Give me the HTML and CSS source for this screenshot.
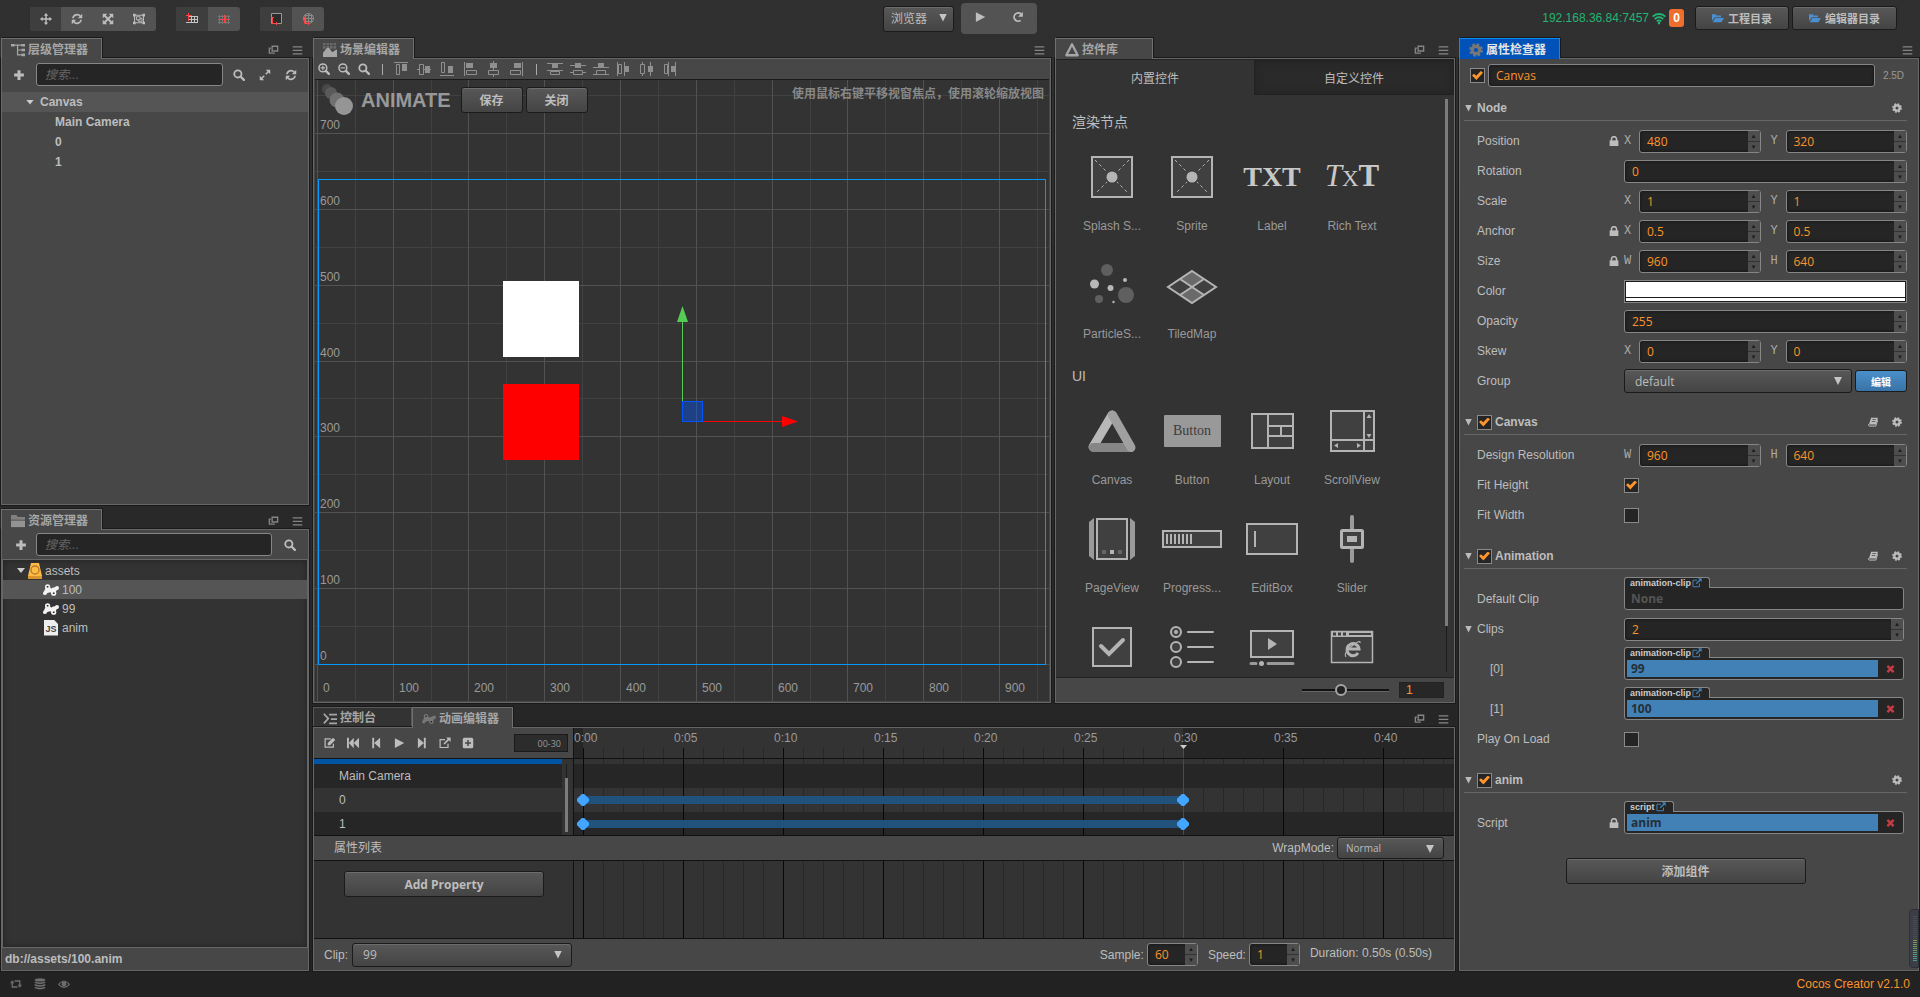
FILE: index.html
```html
<!DOCTYPE html>
<html lang="zh-CN">
<head>
  <meta charset="UTF-8">
  <title>Cocos Creator</title>
  <link rel="stylesheet" href="styles.css">
</head>
<body>

  <!-- icon sprite -->
  <svg class="sprite" aria-hidden="true">
    <symbol id="i-move" viewBox="0 0 16 16"><path d="M8 0l3 3.5H9V7h3.5V5L16 8l-3.5 3V9H9v3.5h2L8 16l-3-3.5h2V9H3.5v2L0 8l3.5-3v2H7V3.5H5z"/></symbol>
    <symbol id="i-refresh" viewBox="0 0 16 16"><path d="M2.5 7A5.6 5.6 0 0 1 12.3 4.2M13.5 9A5.6 5.6 0 0 1 3.7 11.8" fill="none" stroke="currentColor" stroke-width="2.2"/><path d="M15 1v6H9zM1 15V9h6z"/></symbol>
    <symbol id="i-scale" viewBox="0 0 16 16"><path d="M3 3l10 10M13 3L3 13" stroke="currentColor" stroke-width="2.6"/><path d="M1 1h6L1 7zM15 1v6L9 1zM15 15H9l6-6zM1 15V9l6 6z"/></symbol>
    <symbol id="i-rect" viewBox="0 0 16 16"><path d="M2 3h12v10H2zM4.500 5h5v4h-5zM10 7h2v4H7V9" fill="none" stroke="currentColor" stroke-width="1.300"/><path d="M0 1h3.500v3.500H0zM12.500 1H16v3.500h-3.500zM0 11.500h3.500V15H0zM12.500 11.500H16V15h-3.500z"/></symbol>
    <symbol id="i-plus" viewBox="0 0 16 16"><path d="M6 1.500h4V6h4.500v4H10v4.500H6V10H1.500V6H6z"/></symbol>
    <symbol id="i-search" viewBox="0 0 16 16"><circle cx="6.500" cy="6.500" r="4.800" fill="none" stroke="currentColor" stroke-width="2.400"/><path d="M10 10l4.500 4.500" stroke="currentColor" stroke-width="3" stroke-linecap="round"/></symbol>
    <symbol id="i-zoomin" viewBox="0 0 16 16"><circle cx="6.500" cy="6.500" r="5.200" fill="none" stroke="currentColor" stroke-width="2"/><path d="M10.500 10.500l4 4" stroke="currentColor" stroke-width="3" stroke-linecap="round"/><path d="M3.500 6.500h6M6.500 3.500v6" stroke="currentColor" stroke-width="1.500"/></symbol>
    <symbol id="i-zoomout" viewBox="0 0 16 16"><circle cx="6.500" cy="6.500" r="5.200" fill="none" stroke="currentColor" stroke-width="2"/><path d="M10.500 10.500l4 4" stroke="currentColor" stroke-width="3" stroke-linecap="round"/><path d="M3.500 6.500h6" stroke="currentColor" stroke-width="1.500"/></symbol>
    <symbol id="i-expand" viewBox="0 0 16 16"><path d="M3 13l4-4M9 7l4-4" stroke="currentColor" stroke-width="2"/><path d="M15 1v6L9 1zM1 15V9l6 6z"/></symbol>
    <symbol id="i-popout" viewBox="0 0 16 16"><path d="M6 2.500h8v7H6zM10 12.500H2v-7h2" fill="none" stroke="currentColor" stroke-width="2"/></symbol>
    <symbol id="i-menu" viewBox="0 0 16 16"><path d="M1 3.500h14M1 8.500h14M1 13.500h14" stroke="currentColor" stroke-width="1.800"/></symbol>
    <symbol id="i-tree" viewBox="0 0 16 16"><path d="M2 2.500h12M7.500 2.500v11h5M7.500 8h5" fill="none" stroke="currentColor" stroke-width="1.400"/><path d="M0 1h4v3H0zM12 1h4v3h-4zM12 6.500h4v3h-4zM12 12h4v3h-4z"/></symbol>
    <symbol id="i-scene" viewBox="0 0 16 16"><path d="M0 1h16M0 5h16" stroke="#6a6a6a" stroke-width="3" stroke-dasharray="3 1"/><path d="M0 16v-5c2-2 4-6 6-6s3 5 5 5 3-3 5-2v8z"/></symbol>
    <symbol id="i-lib" viewBox="0 0 16 16"><path d="M8 1.500L14.500 14h-13z" fill="none" stroke="currentColor" stroke-width="2.600" stroke-linejoin="round"/></symbol>
    <symbol id="i-gear" viewBox="0 0 16 16"><circle cx="8" cy="8" r="6.300" fill="none" stroke="currentColor" stroke-width="3" stroke-dasharray="2.800 2.150"/><circle cx="8" cy="8" r="4.200" fill="none" stroke="currentColor" stroke-width="3.600"/></symbol>
    <symbol id="i-folder" viewBox="0 0 16 16"><path d="M0 1h6l2 2.500h8v3H0z" opacity=".6"/><path d="M0 7.500h16V15H0z" opacity=".8"/></symbol>
    <symbol id="i-open" viewBox="0 0 16 16"><path d="M0 12V3h5l1 1.500h6V7H4z"/><path d="M4.500 8H16l-3.500 5.500H1z"/></symbol>
    <symbol id="i-console" viewBox="0 0 16 16"><path d="M1 2l5 5.500L1 13" fill="none" stroke="currentColor" stroke-width="2"/><path d="M7 3h9M9 8h7M7 13h9" stroke="currentColor" stroke-width="2"/></symbol>
    <symbol id="i-anim" viewBox="0 0 16 12"><path d="M4.500 3.500L2.200 8.500M4.500 3.500L9 7M3 8l4-1.500L10.500 8.500 13.500 4M9 5.500l4-1" fill="none" stroke="currentColor" stroke-width="3" stroke-linejoin="round"/><circle cx="1.900" cy="9.200" r="1.900"/><circle cx="4.600" cy="2.800" r="2.600"/><circle cx="10.700" cy="9.200" r="2.600"/><circle cx="14" cy="4" r="2"/><path d="M3.800 2h1.600v1.600H3.800zM9.900 8.400h1.600V10H9.900z" fill="#222"/></symbol>
    <symbol id="i-edit" viewBox="0 0 16 16"><path d="M12.500 9v4.500H1.500v-11H9" fill="none" stroke="currentColor" stroke-width="1.600"/><path d="M5 11V8l7-7 3 3-7 7z"/></symbol>
    <symbol id="i-first" viewBox="0 0 16 16"><path d="M0 1h2.500v14H0zM9 1v14L2.500 8zM16 1v14L9 8z"/></symbol>
    <symbol id="i-prev" viewBox="0 0 16 16"><path d="M3 1h2.500v14H3zM13.500 1v14l-8-7z"/></symbol>
    <symbol id="i-play" viewBox="0 0 16 16"><path d="M2.500 1.500L15 8 2.500 14.500z"/></symbol>
    <symbol id="i-next" viewBox="0 0 16 16"><path d="M10.500 1H13v14h-2.500zM2.500 1l8 7-8 7z"/></symbol>
    <symbol id="i-ext" viewBox="0 0 16 16"><path d="M12 9v5H1.500V3.500H8" fill="none" stroke="currentColor" stroke-width="1.600"/><path d="M15.500.5v6l-2.200-2.100L7.500 10 6 8.500l5.600-5.700L9.500.5z"/></symbol>
    <symbol id="i-addkey" viewBox="0 0 16 16"><path fill-rule="evenodd" d="M3 1h10q2 0 2 2v10q0 2-2 2H3q-2 0-2-2V3q0-2 2-2zm4 3v3H4v2h3v3h2V9h3V7H9V4z"/></symbol>
    <symbol id="i-lock" viewBox="0 0 16 16"><path d="M1 7h14v9H1z"/><path d="M4 8V5a4 4 0 0 1 8 0v3" fill="none" stroke="currentColor" stroke-width="2.400"/></symbol>
    <symbol id="i-book" viewBox="0 0 16 16"><path fill-rule="evenodd" d="M5 1h11l-3.500 11H1.500zm2.200 2.500l-.4 1.200h5.500l.4-1.200zM6.300 6.300l-.4 1.200h5.500l.4-1.200z"/><path d="M1 11.500q-.5 3 1 3h10.500L15.500 5" fill="none" stroke="currentColor" stroke-width="1.600"/></symbol>
    <symbol id="i-cross" viewBox="0 0 16 16"><path d="M2.500 2.500l11 11M13.500 2.500l-11 11" stroke="currentColor" stroke-width="4.400"/></symbol>
    <symbol id="i-wifi" viewBox="0 0 16 16"><path d="M.8 6.500a10 10 0 0 1 14.400 0M3.200 9.200a6.500 6.500 0 0 1 9.600 0M5.500 11.800a3.500 3.500 0 0 1 5 0" fill="none" stroke="currentColor" stroke-width="2.100"/><circle cx="8" cy="13.800" r="1.500"/></symbol>
    <symbol id="i-redo" viewBox="0 0 16 16"><path d="M11.500 12.500A5.500 5.500 0 1 1 12 4" fill="none" stroke="currentColor" stroke-width="2.400"/><path d="M14.500 1v6.500H8z"/></symbol>
    <symbol id="i-retweet" viewBox="0 0 16 16"><path d="M3 5v7h7M6 4h7v6" fill="none" stroke="currentColor" stroke-width="1.800"/><path d="M0 7l3-4 3 4zM10 9l3 4 3-4z"/></symbol>
    <symbol id="i-db" viewBox="0 0 16 16"><ellipse cx="8" cy="2.500" rx="7" ry="2.200"/><path d="M1 4.500q7 3 14 0v2.200q-7 3-14 0zM1 8q7 3 14 0v2.200q-7 3-14 0zM1 11.500q7 3 14 0v2.200q-7 3-14 0z"/></symbol>
    <symbol id="i-eye" viewBox="0 0 16 16"><path d="M.8 8.500q7.200-9 14.400 0-7.200 8-14.400 0z" fill="none" stroke="currentColor" stroke-width="1.500"/><circle cx="8" cy="8" r="3.300"/></symbol>
    <symbol id="a-top" viewBox="0 0 16 16"><path d="M1 1.500h14M3.500 3.500h3v10h-3z" fill="none" stroke="currentColor"/><path d="M9 3h5v7H9z"/></symbol>
    <symbol id="a-middle" viewBox="0 0 16 16"><path d="M3.500 3.500h4v10h-4zM1 8.500h2M8 8.500h7" fill="none" stroke="currentColor"/><path d="M9 5h5v7H9z"/></symbol>
    <symbol id="a-bottom" viewBox="0 0 16 16"><path d="M1 14.500h14M2.500 1.500h3v10h-3z" fill="none" stroke="currentColor"/><path d="M9 5h5v7H9z"/></symbol>
    <symbol id="a-left" viewBox="0 0 16 16"><path d="M2.500 1v14M4.500 9.500h10v4h-10z" fill="none" stroke="currentColor"/><path d="M4 2h7v5H4z"/></symbol>
    <symbol id="a-center" viewBox="0 0 16 16"><path d="M8.500 0v2M8.500 7v2M8.500 14v2M3.500 9.500h10v4h-10z" fill="none" stroke="currentColor"/><path d="M5 2h7v5H5z"/></symbol>
    <symbol id="a-right" viewBox="0 0 16 16"><path d="M14.500 1v14M2.500 9.500h10v4h-10z" fill="none" stroke="currentColor"/><path d="M6 2h7v5H6z"/></symbol>
    <symbol id="d-top" viewBox="0 0 16 16"><path d="M0 2.500h16M0 9.500h16M3.500 10.500h9v3h-9z" fill="none" stroke="currentColor"/><path d="M5 3h6v4H5z"/></symbol>
    <symbol id="d-middle" viewBox="0 0 16 16"><path d="M0 4.500h16M0 11.500h3M13 11.500h3M3.500 9.500h9v4h-9z" fill="none" stroke="currentColor"/><path d="M5 2h6v5H5z"/></symbol>
    <symbol id="d-bottom" viewBox="0 0 16 16"><path d="M0 6.500h16M0 13.500h16M3.500 9.500h9v4h-9z" fill="none" stroke="currentColor"/><path d="M5 2h6v4H5z"/></symbol>
    <symbol id="d-left" viewBox="0 0 16 16"><path d="M1.500 1v14M8.500 1v14M2.500 3.500h3v9h-3z" fill="none" stroke="currentColor"/><path d="M9 5h4v6H9z"/></symbol>
    <symbol id="d-center" viewBox="0 0 16 16"><path d="M3.500 1v14M11.500 1v14" fill="none" stroke="currentColor"/><path d="M1.500 3.500h4v9h-4z" fill="#474747" stroke="currentColor"/><path d="M9 5h5v6H9z"/></symbol>
    <symbol id="d-right" viewBox="0 0 16 16"><path d="M6.500 1v14M13.500 1v14M2.500 3.500h3v9h-3z" fill="none" stroke="currentColor"/><path d="M9 5h4v6H9z"/></symbol>
    <symbol id="w-sprite" viewBox="0 0 60 60"><path d="M10 10h40v40H10z" fill="#404040" stroke="#b4b4b4" stroke-width="2"/><path d="M13 13l34 34M47 13L13 47" stroke="#b4b4b4" stroke-dasharray="3 3"/><circle cx="30" cy="30" r="7" fill="#404040"/><circle cx="30" cy="30" r="5.500" fill="#b4b4b4"/></symbol>
  </svg>

  <header class="topbar">
    <div class="topbar-left">
      <div class="btn-group transform">
        <button class="active" aria-label="移动"><svg class="icon"><use href="#i-move"/></svg></button>
        <button aria-label="旋转"><svg class="icon"><use href="#i-refresh"/></svg></button>
        <button aria-label="缩放"><svg class="icon"><use href="#i-scale"/></svg></button>
        <button aria-label="矩形变换"><svg class="icon"><use href="#i-rect"/></svg></button>
      </div>
      <div class="btn-group">
        <button class="active" aria-label="锚点"><svg class="icon" viewBox="0 0 12 12"><path d="M2 3.500h10M2 6.500h10M0 9.500h12M5.500 3v7M8.500 3v7M11.500 3v7" stroke="#c4c4c4"/><path d="M2.500 0v8M0 2.500h6" stroke="#f44"/></svg></button>
        <button aria-label="中心"><svg class="icon" viewBox="0 0 12 12"><path d="M0 3.500h12M0 6.500h12M0 9.500h12M1.500 2v9M4.500 2v9M7.500 2v9M10.500 2v9" stroke="#777"/><path d="M6.500 2v8M2 6.500h9" stroke="#f44"/></svg></button>
      </div>
      <div class="btn-group">
        <button class="active" aria-label="本地"><svg class="icon" viewBox="0 0 12 12"><path d="M1.500.5h10v10h-10z" fill="#2b2b2b" stroke="#999"/><path d="M2.500 4v6.500H8M1 4.500h3M6.500 9v3" fill="none" stroke="#f44"/></svg></button>
        <button aria-label="世界"><svg class="icon" viewBox="0 0 12 12"><circle cx="6.500" cy="5.500" r="5" fill="none" stroke="#8a8a8a"/><path d="M6.500 0v11M1 5.500h11M2 2.500h9M2 8.500h9M3.500 1v9M9.500 1v9" stroke="#8a8a8a"/><path d="M2.500 4v6.500H8M1 4.500h3M6.500 9v3" fill="none" stroke="#f44"/></svg></button>
      </div>
    </div>

    <div class="topbar-center">
      <div class="select browser">
        <select aria-label="预览平台"><option>浏览器</option></select>
      </div>
      <div class="btn-group play-group">
        <button aria-label="运行"><svg class="icon"><use href="#i-play"/></svg></button>
        <button aria-label="刷新"><svg class="icon"><use href="#i-redo"/></svg></button>
      </div>
    </div>

    <div class="topbar-right">
      <span class="ip">192.168.36.84:7457</span>
      <svg class="icon wifi"><use href="#i-wifi"/></svg>
      <span class="badge">0</span>
      <button class="btn dir-btn"><svg class="icon"><use href="#i-open"/></svg>工程目录</button>
      <button class="btn dir-btn"><svg class="icon"><use href="#i-open"/></svg>编辑器目录</button>
    </div>
  </header>

  <main class="workspace">

    <div class="col-left">
      <section class="panel hierarchy">
        <div class="tabs">
          <h2 class="tab active"><svg class="icon"><use href="#i-tree"/></svg>层级管理器</h2>
          <div class="tab-tools">
            <svg class="icon"><use href="#i-popout"/></svg>
            <svg class="icon"><use href="#i-menu"/></svg>
          </div>
        </div>
        <div class="panel-body">
          <div class="search-bar">
            <button class="icon-btn" aria-label="新建"><svg class="icon"><use href="#i-plus"/></svg></button>
            <input class="search" type="text" placeholder="搜索..." aria-label="搜索节点">
            <button class="icon-btn" aria-label="搜索"><svg class="icon"><use href="#i-search"/></svg></button>
            <button class="icon-btn" aria-label="展开"><svg class="icon"><use href="#i-expand"/></svg></button>
            <button class="icon-btn" aria-label="刷新"><svg class="icon"><use href="#i-refresh"/></svg></button>
          </div>
          <ul class="node-tree">
            <li class="selected root"><i class="caret"></i>Canvas</li>
            <li>Main Camera</li>
            <li>0</li>
            <li>1</li>
          </ul>
        </div>
      </section>

      <section class="panel assets">
        <div class="tabs">
          <h2 class="tab active"><svg class="icon"><use href="#i-folder"/></svg>资源管理器</h2>
          <div class="tab-tools">
            <svg class="icon"><use href="#i-popout"/></svg>
            <svg class="icon"><use href="#i-menu"/></svg>
          </div>
        </div>
        <div class="panel-body">
          <div class="search-bar">
            <button class="icon-btn" aria-label="新建"><svg class="icon"><use href="#i-plus"/></svg></button>
            <input class="search" type="text" placeholder="搜索..." aria-label="搜索资源">
            <button class="icon-btn wide" aria-label="搜索"><svg class="icon"><use href="#i-search"/></svg></button>
          </div>
          <ul class="asset-tree">
            <li class="root"><i class="caret"></i><svg class="asset-icon" viewBox="0 0 14 16"><path d="M3 0h8l3 13H0z" fill="#fdbd45"/><path d="M0 13h14v3H0z" fill="#d9962f"/><circle cx="7" cy="7" r="4" fill="#fdbd45" stroke="#b8772a" stroke-width="1.300"/></svg>assets</li>
            <li class="selected"><svg class="asset-icon white"><use href="#i-anim"/></svg>100</li>
            <li><svg class="asset-icon white"><use href="#i-anim"/></svg>99</li>
            <li><span class="js-icon">JS</span>anim</li>
          </ul>
          <div class="asset-path">db://assets/100.anim</div>
        </div>
      </section>
    </div>

    <div class="col-center">
      <div class="center-top">
        <section class="panel scene">
          <div class="tabs">
            <h2 class="tab active"><svg class="icon"><use href="#i-scene"/></svg>场景编辑器</h2>
            <div class="tab-tools">
              <svg class="icon"><use href="#i-menu"/></svg>
            </div>
          </div>
          <div class="panel-body">
            <div class="scene-tools">
              <svg class="icon zoom"><use href="#i-zoomin"/></svg>
              <svg class="icon zoom"><use href="#i-zoomout"/></svg>
              <svg class="icon zoom"><use href="#i-search"/></svg>
              <i class="sep"></i>
              <div class="align">
                <svg><use href="#a-top"/></svg>
                <svg><use href="#a-middle"/></svg>
                <svg><use href="#a-bottom"/></svg>
                <svg><use href="#a-left"/></svg>
                <svg><use href="#a-center"/></svg>
                <svg><use href="#a-right"/></svg>
              </div>
              <i class="sep"></i>
              <div class="align">
                <svg><use href="#d-top"/></svg>
                <svg><use href="#d-middle"/></svg>
                <svg><use href="#d-bottom"/></svg>
                <svg><use href="#d-left"/></svg>
                <svg><use href="#d-center"/></svg>
                <svg><use href="#d-right"/></svg>
              </div>
            </div>
            <div class="scene-view">
              <svg class="scene-canvas">
                <path class="grid-minor" d="M40.5 0v2000M116.500 0v2000M191.500 0v2000M267.500 0v2000M343.500 0v2000M419.500 0v2000M495.500 0v2000M570.500 0v2000M646.500 0v2000M722.500 0v2000M0 15.500h3000M0 91.500h3000M0 167.500h3000M0 243.500h3000M0 318.500h3000M0 394.500h3000M0 470.500h3000M0 546.500h3000"/>
                <path class="grid-major" d="M2.500 0v2000M78.500 0v2000M153.500 0v2000M229.500 0v2000M305.500 0v2000M381.500 0v2000M457.500 0v2000M532.500 0v2000M608.500 0v2000M684.500 0v2000M0 53.500h3000M0 129.500h3000M0 205.500h3000M0 281.500h3000M0 356.500h3000M0 432.500h3000M0 508.500h3000M0 584.500h3000"/>
                <g class="ruler-text">
                  <text x="5" y="49">700</text>
                  <text x="5" y="125">600</text>
                  <text x="5" y="201">500</text>
                  <text x="5" y="277">400</text>
                  <text x="5" y="352">300</text>
                  <text x="5" y="428">200</text>
                  <text x="5" y="504">100</text>
                  <text x="5" y="580">0</text>
                  <text x="8" y="612">0</text>
                  <text x="84" y="612">100</text>
                  <text x="159" y="612">200</text>
                  <text x="235" y="612">300</text>
                  <text x="311" y="612">400</text>
                  <text x="387" y="612">500</text>
                  <text x="463" y="612">600</text>
                  <text x="538" y="612">700</text>
                  <text x="614" y="612">800</text>
                  <text x="690" y="612">900</text>
                </g>
                <rect x="188" y="201" width="76" height="76" fill="#fff"/>
                <rect x="188" y="304" width="76" height="76" fill="#f00"/>
                <rect x="3.500" y="99.500" width="727" height="485" fill="none" stroke="#09f"/>
                <!-- move gizmo -->
                <path d="M367.500 341.500V240" stroke="#5c5"/>
                <path d="M367.500 226l5.500 16h-11z" fill="#5c5"/>
                <path d="M367 341.500h101" stroke="#f00"/>
                <path d="M483 341.500l-16-5.500v11z" fill="#f00"/>
                <rect x="367.500" y="321.500" width="20" height="20" fill="#05f" fill-opacity=".4" stroke="#05f"/>
              </svg>
              <div class="scene-overlay">
                <svg class="animate-logo" viewBox="0 0 32 32"><circle cx="5" cy="5" r="5" fill="#484848"/><circle cx="9" cy="9" r="6" fill="#5a5a5a"/><circle cx="15" cy="16" r="7.500" fill="#707070"/><circle cx="22" cy="22" r="9" fill="#959595"/></svg>
                <strong class="animate-title">ANIMATE</strong>
                <button class="btn">保存</button>
                <button class="btn">关闭</button>
                <span class="hint">使用鼠标右键平移视窗焦点，使用滚轮缩放视图</span>
              </div>
            </div>
          </div>
        </section>

        <section class="panel library">
          <div class="tabs">
            <h2 class="tab active"><svg class="icon"><use href="#i-lib"/></svg>控件库</h2>
            <div class="tab-tools">
              <svg class="icon"><use href="#i-popout"/></svg>
              <svg class="icon"><use href="#i-menu"/></svg>
            </div>
          </div>
          <div class="panel-body">
            <div class="lib-tabs">
              <button class="active">内置控件</button>
              <button>自定义控件</button>
            </div>
            <div class="lib-content">
              <div class="lib-scroll">
                <h3>渲染节点</h3>
                <div class="widgets">
                  <div class="widget"><svg><use href="#w-sprite"/></svg><span>Splash S...</span></div>
                  <div class="widget"><svg><use href="#w-sprite"/></svg><span>Sprite</span></div>
                  <div class="widget"><div class="txt-icon"><b>TXT</b></div><span>Label</span></div>
                  <div class="widget"><div class="txt-icon rich"><i>T</i><small>X</small><b>T</b></div><span>Rich Text</span></div>
                  <div class="widget"><svg viewBox="0 0 60 60"><g fill="#5f5f5f"><circle cx="25" cy="15" r="6"/><circle cx="44" cy="40" r="8"/><circle cx="17" cy="44" r="4"/></g><g fill="#b8b8b8"><circle cx="12.500" cy="29" r="4.500"/><circle cx="28.500" cy="33" r="3"/><circle cx="43" cy="25" r="2"/><circle cx="31.500" cy="47" r="1.200"/></g></svg><span>ParticleS...</span></div>
                  <div class="widget"><svg viewBox="0 0 60 60"><path d="M30 16l12 8-12 8-12-8zM30 32l12 8-12 8-12-8z" fill="#6a6a6a"/><path d="M18 24l12 8-12 8-12-8zM42 24l12 8-12 8-12-8z" fill="#404040"/><path d="M30 16l24 16-24 16L6 32zM18 24l24 16M42 24L18 40" fill="none" stroke="#b4b4b4" stroke-width="2"/></svg><span>TiledMap</span></div>
                </div>
                <h3>UI</h3>
                <div class="widgets">
                  <div class="widget"><svg viewBox="0 0 60 60"><path d="M11 46L30 14" stroke="#b8b8b8" stroke-width="9" stroke-linecap="round"/><path d="M11.500 46.500h37" stroke="#868686" stroke-width="9" stroke-linecap="round"/><path d="M30.500 14L49 46.500" stroke="#a0a0a0" stroke-width="9" stroke-linecap="round"/></svg><span>Canvas</span></div>
                  <div class="widget"><div class="btn-icon">Button</div><span>Button</span></div>
                  <div class="widget"><svg viewBox="0 0 60 60"><path d="M10 13h41v34H10zM26 13v34M26 25h25M26 35h25M39 25v10" fill="#404040" stroke="#b4b4b4" stroke-width="2"/></svg><span>Layout</span></div>
                  <div class="widget"><svg viewBox="0 0 60 60"><path d="M9 10h43v40H9zM9 39h43M42 10v40" fill="#404040" stroke="#b4b4b4" stroke-width="2"/><path d="M47 13l2.500 4h-5zM47 37l2.500-4h-5zM12 44.500l4-2.500v5zM39 44.500l-4-2.500v5z" fill="#b4b4b4"/></svg><span>ScrollView</span></div>
                  <div class="widget"><svg viewBox="0 0 60 60"><path d="M7 13l5-4v42l-5-4zM53 13l-5-4v42l5-4z" fill="#9a9a9a"/><path d="M15 10h30v40H15z" fill="#404040" stroke="#b4b4b4" stroke-width="2"/><path d="M20 41h4v4h-4zM36 41h4v4h-4z" fill="#666"/><path d="M28 41h4v4h-4z" fill="#b4b4b4"/></svg><span>PageView</span></div>
                  <div class="widget"><svg viewBox="0 0 60 60"><path d="M1 22h58v16H1z" fill="#404040" stroke="#b4b4b4" stroke-width="2"/><path d="M5 25v10M9 25v10M13 25v10M17 25v10M21 25v10M25 25v10M29 25v10" stroke="#b4b4b4" stroke-width="2"/></svg><span>Progress...</span></div>
                  <div class="widget"><svg viewBox="0 0 60 60"><path d="M5 15h50v30H5z" fill="#404040" stroke="#b4b4b4" stroke-width="2"/><path d="M13 22v16" stroke="#b4b4b4" stroke-width="2"/></svg><span>EditBox</span></div>
                  <div class="widget"><svg viewBox="0 0 60 60"><path d="M30 8v44" stroke="#9a9a9a" stroke-width="4" stroke-linecap="round"/><rect x="19.500" y="21.500" width="21" height="17" rx="1" fill="#404040" stroke="#b4b4b4" stroke-width="3"/><path d="M25 27h10v6H25z" fill="#b4b4b4"/></svg><span>Slider</span></div>
                  <div class="widget"><svg viewBox="0 0 60 60"><path d="M11 11h38v38H11z" fill="#404040" stroke="#b4b4b4" stroke-width="2"/><path d="M19 29l8 8 14-14" fill="none" stroke="#b4b4b4" stroke-width="4" stroke-linecap="round"/></svg></div>
                  <div class="widget"><svg viewBox="0 0 60 60"><g fill="#404040" stroke="#b4b4b4" stroke-width="2"><circle cx="14" cy="15" r="5"/><circle cx="14" cy="30" r="5"/><circle cx="14" cy="45" r="5"/><path d="M26 15h25M26 30h25M26 45h25" stroke-linecap="round"/></g><circle cx="14" cy="15" r="2" fill="#b4b4b4"/></svg></div>
                  <div class="widget"><svg viewBox="0 0 60 60"><path d="M9 14h42v26H9z" fill="#404040" stroke="#b4b4b4" stroke-width="2"/><path d="M26 21l9 6-9 6z" fill="#b4b4b4"/><path d="M9 46.500h5M26 46.500h25" stroke="#9a9a9a" stroke-width="3" stroke-linecap="round"/><circle cx="19.500" cy="46.500" r="2.500" fill="#b4b4b4"/></svg></div>
                  <div class="widget"><svg viewBox="0 0 60 60"><path d="M9.500 14.500h41v31h-41z" fill="#404040" stroke="#b4b4b4" stroke-width="1.500"/><path d="M9 14h42v6H9z" fill="#b4b4b4"/><path d="M11 17h14" stroke="#404040" stroke-width="3" stroke-dasharray="3 2"/><path d="M27 17h22" stroke="#404040" stroke-width="2"/><path d="M36 36a6 6 0 1 1 1-4H26" fill="none" stroke="#b4b4b4" stroke-width="3"/><path d="M24 40q-3-4 6-11t8-3" fill="none" stroke="#b4b4b4" stroke-width="1.200"/></svg></div>
                </div>
              </div>
              <div class="scrollbar"><i></i></div>
            </div>
            <div class="lib-footer">
              <input class="zoom-slider" type="range" min="0" max="100" value="44" aria-label="图标大小">
              <input class="zoom-value" type="text" value="1" aria-label="图标缩放">
            </div>
          </div>
        </section>
      </div>

      <section class="panel timeline">
        <div class="tabs">
          <h2 class="tab"><svg class="icon"><use href="#i-console"/></svg>控制台</h2>
          <h2 class="tab active"><svg class="icon dim"><use href="#i-anim"/></svg>动画编辑器</h2>
          <div class="tab-tools">
            <svg class="icon"><use href="#i-popout"/></svg>
            <svg class="icon"><use href="#i-menu"/></svg>
          </div>
        </div>
        <div class="panel-body">
          <div class="tl-row tl-head">
            <div class="tl-side tl-tools">
              <button aria-label="编辑"><svg class="icon"><use href="#i-edit"/></svg></button>
              <button aria-label="首帧"><svg class="icon"><use href="#i-first"/></svg></button>
              <button aria-label="上一帧"><svg class="icon"><use href="#i-prev"/></svg></button>
              <button aria-label="播放"><svg class="icon"><use href="#i-play"/></svg></button>
              <button aria-label="下一帧"><svg class="icon"><use href="#i-next"/></svg></button>
              <button aria-label="打开"><svg class="icon"><use href="#i-ext"/></svg></button>
              <button aria-label="插入事件帧"><svg class="icon"><use href="#i-addkey"/></svg></button>
              <input class="frame" type="text" value="00-30" aria-label="当前帧">
            </div>
            <div class="tl-main ruler">
              <div class="ruler-labels">
                <span>0:00</span><span>0:05</span><span>0:10</span><span>0:15</span><span>0:20</span><span>0:25</span><span>0:30</span><span>0:35</span><span>0:40</span>
              </div>
              <div class="ruler-ticks frames"></div>
              <i class="playhead"></i>
            </div>
          </div>
          <div class="tl-row tl-tracks">
            <div class="tl-side tl-nodes">
              <ul>
                <li class="current"></li>
                <li>Main Camera</li>
                <li>0</li>
                <li>1</li>
              </ul>
              <div class="scrollbar"><i></i></div>
            </div>
            <div class="tl-main">
              <div class="track short"></div>
              <div class="track"></div>
              <div class="track"></div>
              <div class="track"></div>
              <div class="frames overlay"></div>
              <i class="playhead"></i>
              <div class="keys">
                <div class="key-row"><i></i><b></b><i></i></div>
                <div class="key-row"><i></i><b></b><i></i></div>
              </div>
            </div>
          </div>
          <div class="prop-head">
            <span>属性列表</span>
            <label for="wrap">WrapMode:</label>
            <div class="select wrap-select"><select id="wrap"><option>Normal</option></select></div>
          </div>
          <div class="tl-row tl-props">
            <div class="tl-side"><button class="btn add-prop">Add Property</button></div>
            <div class="tl-main frames"><i class="playhead"></i></div>
          </div>
          <div class="tl-footer">
            <label for="clip">Clip:</label>
            <div class="select clip-select"><select id="clip"><option>99</option></select></div>
            <label class="push" for="sample">Sample:</label>
            <div class="num small"><input id="sample" type="text" value="60"><span class="spin"></span></div>
            <label for="speed">Speed:</label>
            <div class="num small"><input id="speed" type="text" value="1"><span class="spin"></span></div>
            <span class="duration">Duration: 0.50s (0.50s)</span>
          </div>
        </div>
      </section>
    </div>

    <section class="panel inspector">
      <div class="tabs">
        <h2 class="tab active focused"><svg class="icon"><use href="#i-gear"/></svg>属性检查器</h2>
        <div class="tab-tools">
          <svg class="icon"><use href="#i-menu"/></svg>
        </div>
      </div>
      <div class="panel-body">
        <div class="name-row">
          <input type="checkbox" checked aria-label="启用节点">
          <input class="node-name" type="text" value="Canvas" aria-label="节点名称">
          <span>2.5D</span>
        </div>

        <div class="section first">
          <h3><i class="fold"></i>Node<svg class="icon end"><use href="#i-gear"/></svg></h3>
          <div class="prop">
            <div class="prop-label">Position<svg class="icon"><use href="#i-lock"/></svg></div>
            <label for="px">X</label><div class="num"><input id="px" type="text" value="480"><span class="spin"></span></div>
            <label class="second" for="py">Y</label><div class="num"><input id="py" type="text" value="320"><span class="spin"></span></div>
          </div>
          <div class="prop">
            <label class="prop-label" for="rot">Rotation</label>
            <div class="num"><input id="rot" type="text" value="0"><span class="spin"></span></div>
          </div>
          <div class="prop">
            <div class="prop-label">Scale</div>
            <label for="sx">X</label><div class="num"><input id="sx" type="text" value="1"><span class="spin"></span></div>
            <label class="second" for="sy">Y</label><div class="num"><input id="sy" type="text" value="1"><span class="spin"></span></div>
          </div>
          <div class="prop">
            <div class="prop-label">Anchor<svg class="icon"><use href="#i-lock"/></svg></div>
            <label for="ax">X</label><div class="num"><input id="ax" type="text" value="0.5"><span class="spin"></span></div>
            <label class="second" for="ay">Y</label><div class="num"><input id="ay" type="text" value="0.5"><span class="spin"></span></div>
          </div>
          <div class="prop">
            <div class="prop-label">Size<svg class="icon"><use href="#i-lock"/></svg></div>
            <label for="sw">W</label><div class="num"><input id="sw" type="text" value="960"><span class="spin"></span></div>
            <label class="second" for="sh">H</label><div class="num"><input id="sh" type="text" value="640"><span class="spin"></span></div>
          </div>
          <div class="prop">
            <div class="prop-label">Color</div>
            <button class="color" aria-label="Color"><i></i><i></i></button>
          </div>
          <div class="prop">
            <label class="prop-label" for="opacity">Opacity</label>
            <div class="num"><input id="opacity" type="text" value="255"><span class="spin"></span></div>
          </div>
          <div class="prop">
            <div class="prop-label">Skew</div>
            <label for="kx">X</label><div class="num"><input id="kx" type="text" value="0"><span class="spin"></span></div>
            <label class="second" for="ky">Y</label><div class="num"><input id="ky" type="text" value="0"><span class="spin"></span></div>
          </div>
          <div class="prop">
            <label class="prop-label" for="group">Group</label>
            <div class="select group-select"><select id="group"><option>default</option></select></div>
            <button class="btn blue">编辑</button>
          </div>
        </div>

        <div class="section">
          <h3><i class="fold"></i><input type="checkbox" checked aria-label="启用 Canvas">Canvas<svg class="icon end"><use href="#i-book"/></svg><svg class="icon"><use href="#i-gear"/></svg></h3>
          <div class="prop">
            <div class="prop-label">Design Resolution</div>
            <label for="dw">W</label><div class="num"><input id="dw" type="text" value="960"><span class="spin"></span></div>
            <label class="second" for="dh">H</label><div class="num"><input id="dh" type="text" value="640"><span class="spin"></span></div>
          </div>
          <div class="prop">
            <label class="prop-label" for="fh">Fit Height</label>
            <input id="fh" type="checkbox" checked>
          </div>
          <div class="prop">
            <label class="prop-label" for="fw">Fit Width</label>
            <input id="fw" type="checkbox">
          </div>
        </div>

        <div class="section inset">
          <h3><i class="fold"></i><input type="checkbox" checked aria-label="启用 Animation">Animation<svg class="icon end"><use href="#i-book"/></svg><svg class="icon"><use href="#i-gear"/></svg></h3>
          <div class="prop tall">
            <div class="prop-label">Default Clip</div>
            <div class="asset-field empty">
              <a class="type" href="#">animation-clip<svg class="icon"><use href="#i-ext"/></svg></a>
              <div class="box"><span>None</span></div>
            </div>
          </div>
          <div class="prop">
            <label class="prop-label" for="clips"><i class="fold"></i>Clips</label>
            <div class="num"><input id="clips" type="text" value="2"><span class="spin"></span></div>
          </div>
          <div class="prop tall">
            <div class="prop-label sub">[0]</div>
            <div class="asset-field">
              <a class="type" href="#">animation-clip<svg class="icon"><use href="#i-ext"/></svg></a>
              <div class="box"><span>99</span><button aria-label="移除"><svg class="icon"><use href="#i-cross"/></svg></button></div>
            </div>
          </div>
          <div class="prop tall">
            <div class="prop-label sub">[1]</div>
            <div class="asset-field">
              <a class="type" href="#">animation-clip<svg class="icon"><use href="#i-ext"/></svg></a>
              <div class="box"><span>100</span><button aria-label="移除"><svg class="icon"><use href="#i-cross"/></svg></button></div>
            </div>
          </div>
          <div class="prop">
            <label class="prop-label" for="pol">Play On Load</label>
            <input id="pol" type="checkbox">
          </div>
        </div>

        <div class="section inset">
          <h3><i class="fold"></i><input type="checkbox" checked aria-label="启用 anim">anim<svg class="icon end"><use href="#i-gear"/></svg></h3>
          <div class="prop tall">
            <div class="prop-label">Script<svg class="icon"><use href="#i-lock"/></svg></div>
            <div class="asset-field">
              <a class="type" href="#">script<svg class="icon"><use href="#i-ext"/></svg></a>
              <div class="box"><span>anim</span><button aria-label="移除"><svg class="icon"><use href="#i-cross"/></svg></button></div>
            </div>
          </div>
        </div>

        <button class="btn add-component">添加组件</button>
        <div class="meter"><i></i></div>
      </div>
    </section>
  </main>

  <footer class="statusbar">
    <svg class="icon"><use href="#i-retweet"/></svg>
    <svg class="icon"><use href="#i-db"/></svg>
    <svg class="icon"><use href="#i-eye"/></svg>
    <span>Cocos Creator v2.1.0</span>
  </footer>

</body>
</html>
```

FILE: styles.css
```css
* {
  box-sizing: border-box;
}

body {
  margin: 0;
  height: 100vh;
  display: flex;
  flex-direction: column;
  overflow: hidden;
  background: linear-gradient(#303030, #222);
  color: #bdbdbd;
  font-family: "Liberation Sans", "Noto Sans CJK SC", sans-serif;
  font-size: 12px;
  line-height: 18px;
}

h2, h3, ul {
  margin: 0;
  padding: 0;
  font-size: 12px;
  list-style: none;
}

button, input, select {
  margin: 0;
  padding: 0;
  border: none;
  background: none;
  color: inherit;
  font-family: inherit;
  font-size: 12px;
}

button {
  display: flex;
  align-items: center;
  justify-content: center;
}

.sprite {
  position: absolute;
  width: 0;
  height: 0;
}

.icon {
  width: 12px;
  height: 12px;
  flex: none;
  fill: currentColor;
}

/* shared controls */
.btn {
  height: 26px;
  border: 1px solid #1b1b1b;
  border-radius: 3px;
  background: linear-gradient(#585858, #444);
  box-shadow: inset 0 1px 0 #6c6c6c;
  font-family: "Open Sans", "Noto Sans CJK SC", sans-serif;
  font-weight: bold;
}

.btn.blue {
  width: 52px;
  height: 22px;
  margin-left: 3px;
  background: linear-gradient(#4a8fca, #3873a6);
  box-shadow: none;
  color: #fff;
  font-size: 10px;
}

.select {
  position: relative;
  height: 24px;
}

.select select {
  appearance: none;
  width: 100%;
  height: 100%;
  padding: 0 10px;
  border: 1px solid #1b1b1b;
  border-radius: 3px;
  background: linear-gradient(#585858, #444);
  box-shadow: inset 0 1px 0 #6c6c6c;
  font-family: "Open Sans", "Noto Sans CJK SC", sans-serif;
}

.select::after {
  content: "";
  position: absolute;
  top: 8px;
  right: 10px;
  width: 8px;
  height: 8px;
  background: #c4c4c4;
  clip-path: polygon(0 0, 100% 0, 50% 100%);
}

.select.browser select {
  padding: 0 7px;
}

.select.browser::after {
  right: 7px;
}

input[type="checkbox"] {
  appearance: none;
  width: 15px;
  height: 15px;
  flex: none;
  border: 1px solid #8a8a8a;
  background: #252525;
}

input[type="checkbox"]:checked::after {
  content: "";
  display: block;
  width: 11px;
  height: 9px;
  margin: 2px 1px;
  background: #fd942b;
  clip-path: polygon(0 50%, 18% 30%, 38% 52%, 80% 0, 100% 20%, 40% 100%);
}

.num {
  flex: 1;
  min-width: 0;
  height: 23px;
  display: flex;
  border: 1px solid #868686;
  border-radius: 3px;
  background: #252525;
  box-shadow: inset 0 0 3px #111;
}

.num input {
  flex: 1;
  width: 0;
  padding: 0 7px;
  color: #fd942b;
  font-family: "Open Sans", sans-serif;
}

.spin {
  width: 12px;
  display: flex;
  flex-direction: column;
  gap: 1px;
  background: #333;
}

.spin::before, .spin::after {
  flex: 1;
  background: #4e4e4e;
  color: #1c1c1c;
  font-family: "DejaVu Sans", sans-serif;
  font-size: 7px;
  line-height: 10px;
  text-align: center;
}

.spin::before {
  content: "▴";
}

.spin::after {
  content: "▾";
}

.scrollbar {
  width: 3px;
  background: linear-gradient(90deg, transparent 1px, #1c1c1c 1px 2px, transparent 2px);
}

.scrollbar i {
  display: block;
  background: #7c7c7c;
}

.caret {
  width: 8px;
  height: 5px;
  background: #ccc;
  clip-path: polygon(0 0, 100% 0, 50% 100%);
}

.fold {
  width: 7px;
  height: 7px;
  margin-right: 5px;
  background: #bbb;
  clip-path: polygon(0 0, 100% 0, 50% 100%);
}

/* top bar */
.topbar {
  height: 38px;
  flex: none;
  display: grid;
  grid-template-columns: 1fr auto 1fr;
}

.topbar-left, .topbar-center, .topbar-right {
  display: flex;
  align-items: center;
}

.topbar-left {
  gap: 20px;
  padding-left: 30px;
}

.btn-group {
  display: flex;
  height: 24px;
  border-radius: 3px;
  background: #535353;
  overflow: hidden;
}

.btn-group button {
  width: 32px;
}

.transform {
  padding-right: 2px;
}

.transform button {
  width: 31px;
}

.btn-group .active {
  background: #3e3e3e;
}

.topbar-center {
  gap: 7px;
  padding-bottom: 1px;
}

.browser {
  width: 71px;
  height: 26px;
}

.play-group {
  width: 76px;
  height: 31px;
  padding-bottom: 3px;
  border-radius: 4px;
}

.play-group button {
  width: 38px;
}

.topbar-right {
  justify-content: flex-end;
  padding: 0 23px 2px 0;
}

.ip {
  color: #22b573;
}

.wifi {
  width: 14px;
  height: 14px;
  margin: 0 3px;
  color: #22b573;
}

.badge {
  width: 15px;
  margin-right: 11px;
  border-radius: 3px;
  background: #ee6f2d;
  color: #fff;
  font-weight: bold;
  text-align: center;
}

.dir-btn {
  height: 24px;
  padding: 0 16px;
  gap: 4px;
  font-size: 11px;
}

.dir-btn + .dir-btn {
  margin-left: 3px;
}

.dir-btn .icon {
  color: #4b8fd0;
}

/* panels */
.workspace {
  flex: 1;
  min-height: 0;
  display: flex;
  gap: 4px;
  padding: 0 1px;
}

.col-left, .col-center {
  display: flex;
  flex-direction: column;
  gap: 4px;
}

.col-left {
  width: 308px;
}

.col-center {
  flex: 1;
  min-width: 0;
}

.center-top {
  flex: 1;
  min-height: 0;
  display: flex;
  gap: 4px;
}

.panel {
  display: flex;
  flex-direction: column;
  min-height: 0;
}

.hierarchy {
  flex: 1;
}

.assets {
  height: 462px;
}

.scene {
  flex: 1;
  min-width: 0;
}

.library {
  width: 400px;
}

.timeline {
  height: 264px;
}

.inspector {
  width: 460px;
}

.tabs {
  height: 20px;
  flex: none;
  display: flex;
}

.tab {
  position: relative;
  min-width: 99px;
  height: 20px;
  display: flex;
  align-items: center;
  padding: 2px 13px 0 9px;
  border: 1px solid #585858;
  border-bottom: none;
  background: #333;
  box-shadow: 0 0 0 1px #1a1a1a;
  color: #a6a6a6;
  line-height: 17px;
}

.tab.active {
  z-index: 1;
  height: 21px;
  border-color: #707070;
  background: #474747;
  box-shadow: 1px -1px 0 #1a1a1a;
}

.library .tab {
  min-width: 98px;
}

.tab.focused {
  border-color: #0a8cf5;
  background: #0052b8;
  color: #e4e4e4;
}

.tab .icon {
  width: 14px;
  height: 14px;
  margin-right: 3px;
}

.tab .dim, .focused .icon {
  color: #777;
}

.tab-tools {
  display: flex;
  align-items: center;
  gap: 13px;
  margin-left: auto;
  padding: 3px 6px 0 0;
  color: #858585;
}

.tab-tools .icon {
  width: 11px;
}

.panel-body {
  position: relative;
  flex: 1;
  min-height: 0;
  display: flex;
  flex-direction: column;
  border: 1px solid #666;
  background: #474747;
  box-shadow: 0 0 0 1px #1a1a1a;
}

/* hierarchy and assets */
.search-bar {
  display: flex;
  align-items: center;
  flex: none;
  height: 29px;
  padding-right: 4px;
}

.hierarchy .search-bar {
  height: 33px;
  padding-bottom: 2px;
}

.icon-btn {
  width: 26px;
}

.icon-btn:first-child {
  width: 34px;
}

.icon-btn.wide {
  width: 29px;
}

.search {
  flex: 1;
  min-width: 0;
  height: 23px;
  margin-right: 3px;
  padding: 0 8px;
  border: 1px solid #868686;
  border-radius: 3px;
  background: #252525;
  font-style: italic;
}

.search::placeholder {
  color: #666;
}

.node-tree li {
  height: 20px;
  padding-left: 53px;
  font-weight: bold;
  line-height: 20px;
}

.node-tree .root {
  display: flex;
  align-items: center;
  gap: 6px;
  padding-left: 24px;
}

.node-tree .selected, .asset-tree .selected {
  background: #555;
}

.assets .icon-btn:first-child {
  padding-left: 4px;
}

.asset-tree {
  flex: 1;
  padding-top: 1px;
  border: 1px solid #666;
  background: #333;
  box-shadow: inset 0 0 6px #222;
}

.asset-tree li {
  display: flex;
  align-items: center;
  height: 19px;
  padding-left: 40px;
  gap: 3px;
}

.asset-tree .root {
  padding-left: 14px;
}

.asset-icon {
  width: 14px;
  height: 16px;
}

.asset-icon.white {
  width: 16px;
  height: 12px;
  fill: #f2f2f2;
  color: #f2f2f2;
}

.js-icon {
  width: 14px;
  height: 16px;
  margin: 0 1px;
  background: #eee;
  clip-path: polygon(0 0, 70% 0, 100% 28%, 100% 100%, 0 100%);
  color: #444;
  font-size: 9px;
  font-weight: bold;
  text-align: center;
}

.asset-path {
  height: 22px;
  padding: 2px 3px;
  font-weight: bold;
}

/* scene */
.scene-tools {
  height: 20px;
  flex: none;
  display: flex;
  align-items: center;
  padding-left: 4px;
  gap: 8px;
}

.scene-tools .sep {
  width: 1px;
  height: 11px;
  margin: 0 2px 0 4px;
  background: #aaa;
}

.align {
  display: flex;
  gap: 7px;
  color: #8f8f8f;
}

.align svg {
  width: 16px;
  height: 16px;
  fill: currentColor;
}

.scene-view {
  position: relative;
  flex: 1;
  min-height: 0;
  margin: 0 1px 1px;
  border-top: 1px solid #1a1a1a;
  background: #333;
}

.scene-canvas {
  position: absolute;
  width: 100%;
  height: 100%;
}

.grid-minor, .grid-major {
  fill: none;
  stroke: #414141;
}

.grid-major {
  stroke: #525252;
}

.ruler-text {
  fill: #999;
}

.scene-overlay {
  position: relative;
  display: flex;
  align-items: center;
  height: 40px;
  padding: 0 5px 0 7px;
}

.animate-logo {
  width: 32px;
  height: 32px;
}

.animate-title {
  margin: 0 10px 0 7px;
  color: #999;
  font-size: 20px;
}

.scene-overlay .btn {
  width: 62px;
  margin-right: 3px;
}

.hint {
  align-self: flex-start;
  margin: 5px 0 0 auto;
  color: #888;
  font-weight: bold;
  white-space: nowrap;
}

/* widget library */
.library .panel-body {
  background: #333;
}

.lib-tabs {
  height: 36px;
  flex: none;
  display: flex;
  border-top: 1px solid #222;
}

.lib-tabs button {
  flex: 1;
  border: 1px solid #222;
  background: #2a2a2a;
  box-shadow: inset 0 0 8px #222;
}

.lib-tabs .active {
  border: none;
  background: none;
  box-shadow: none;
}

.lib-content {
  flex: 1;
  min-height: 0;
  display: flex;
  padding: 4px 6px 5px 16px;
}

.lib-scroll {
  flex: 1;
  overflow: hidden;
  padding-top: 10px;
}

.lib-scroll h3 {
  margin: 4px 0 16px;
  font-size: 14px;
  font-weight: normal;
}

.widgets {
  display: grid;
  grid-template-columns: repeat(auto-fill, 80px);
}

.widget {
  height: 108px;
  display: flex;
  flex-direction: column;
  align-items: center;
  gap: 10px;
  color: #999;
}

.widget svg, .txt-icon {
  width: 60px;
  height: 60px;
  flex: none;
}

.txt-icon {
  display: flex;
  align-items: center;
  justify-content: center;
  color: #c8c8c8;
  font-family: "Liberation Serif", serif;
  font-size: 28px;
}

.rich {
  align-items: baseline;
  padding-top: 20px;
  font-size: 31px;
}

.rich small {
  font-size: 23px;
}

.btn-icon {
  width: 57px;
  height: 32px;
  margin: 14px 0;
  border-radius: 1px;
  background: #999;
  color: #3c3c3c;
  font-family: "Liberation Serif", serif;
  font-size: 14px;
  line-height: 31px;
  text-align: center;
}

.library .scrollbar i {
  height: 92%;
}

.lib-footer {
  height: 25px;
  flex: none;
  display: flex;
  align-items: center;
  justify-content: flex-end;
  gap: 10px;
  padding-right: 10px;
  border-top: 1px solid #222;
  background: #474747;
}

.zoom-slider {
  appearance: none;
  width: 87px;
  height: 3px;
  border-bottom: 1px solid #666;
  background: #111;
}

.zoom-slider::-webkit-slider-thumb {
  appearance: none;
  width: 12px;
  height: 12px;
  border: 2px solid #a4a4a4;
  border-radius: 50%;
  background: #222;
}

.zoom-value {
  width: 45px;
  height: 16px;
  padding: 0 6px;
  border: 1px solid #222;
  background: #272727;
  color: #fd942b;
}

/* animation editor */
.tl-row {
  display: flex;
}

.tl-side {
  width: 260px;
  flex: none;
  border-right: 1px solid #111;
}

.tl-main {
  position: relative;
  flex: 1;
  min-width: 0;
  overflow: hidden;
}

.frames {
  background:
    linear-gradient(90deg, #080808 1px, transparent 1px) 9px 0 / 100px 100%,
    linear-gradient(90deg, #272727 1px, transparent 1px) 9px 0 / 20px 100%;
}

.tl-head {
  height: 31px;
  flex: none;
  border-bottom: 1px solid #111;
}

.tl-tools {
  display: flex;
  align-items: center;
  padding: 0 5px 0 4px;
}

.tl-tools button {
  width: 23px;
}

.frame {
  width: 54px;
  height: 18px;
  margin-left: auto;
  padding: 0 6px;
  border: 1px solid #1a1a1a;
  background: #2c2c2c;
  color: #999;
  font-family: "Open Sans", sans-serif;
  font-size: 9px;
  text-align: right;
}

.ruler {
  background: linear-gradient(90deg, #262626 9px, #333 9px 609px, #262626 609px);
}

.ruler-labels {
  display: flex;
  height: 20px;
  padding-top: 1px;
  color: #999;
}

.ruler-labels span {
  width: 100px;
  flex: none;
}

.ruler-ticks {
  height: 10px;
}

.playhead {
  position: absolute;
  top: 0;
  bottom: 0;
  left: 609px;
  width: 1px;
  background: #f00;
}

.ruler .playhead {
  top: 20px;
}

.ruler .playhead::before {
  content: "";
  position: absolute;
  top: -3px;
  left: -3px;
  width: 7px;
  height: 4px;
  background: #ccc;
  clip-path: polygon(0 0, 100% 0, 50% 100%);
}

.tl-tracks {
  height: 77px;
  flex: none;
  overflow: hidden;
  border-bottom: 1px solid #111;
  background: #333;
}

.tl-nodes {
  display: flex;
}

.tl-nodes ul {
  flex: 1;
}

.tl-nodes li {
  height: 24px;
  padding: 3px 25px;
}

.tl-nodes .current {
  height: 5px;
  padding: 0;
  background: #0055a5;
}

.tl-nodes li:nth-child(2n), .track:nth-child(2n) {
  background: #262626;
}

.tl-nodes .scrollbar {
  margin: 5px 5px 3px 3px;
}

.tl-nodes .scrollbar i {
  height: 54px;
  margin-top: 14px;
}

.track {
  height: 24px;
}

.track.short {
  height: 5px;
}

/* frame lines and keys lie over the rows */
.frames.overlay, .keys {
  position: absolute;
  top: 0;
  bottom: 0;
  left: 0;
  right: 0;
}

.keys {
  padding: 29px 0 0 3px;
}

.key-row {
  width: 612px;
  height: 24px;
  display: flex;
  align-items: center;
}

.key-row b {
  flex: 1;
  height: 8px;
  margin: 0 -6px;
  background: #20527c;
}

.key-row i {
  z-index: 1;
  width: 12px;
  height: 12px;
  background: #42a5ff;
  clip-path: polygon(40% 0, 60% 0, 100% 40%, 100% 60%, 60% 100%, 40% 100%, 0 60%, 0 40%);
}

.prop-head {
  height: 25px;
  flex: none;
  display: flex;
  align-items: center;
  padding: 0 10px 0 20px;
  border-bottom: 1px solid #111;
}

.prop-head label {
  margin: 0 3px 0 auto;
}

.wrap-select {
  width: 107px;
  height: 22px;
}

.wrap-select select {
  padding: 0 8px;
  font-size: 10px;
}

.tl-props {
  flex: 1;
  min-height: 0;
  border-bottom: 1px solid #111;
  background: #333;
}

.add-prop {
  width: 200px;
  margin: 10px 30px;
}

.tl-footer {
  height: 31px;
  flex: none;
  display: flex;
  align-items: center;
  padding: 0 22px 0 10px;
}

.clip-select {
  flex: 0 1 220px;
  margin-left: 4px;
}

.tl-footer .push {
  margin-left: auto;
}

.num.small {
  width: 51px;
  flex: none;
  margin: 0 10px 0 3px;
}

.duration {
  padding-bottom: 4px;
}

/* inspector */
.inspector .panel-body {
  padding: 5px 11px 0 4px;
}

.name-row {
  display: flex;
  align-items: center;
  gap: 3px;
  padding: 0 3px 0 6px;
}

.node-name {
  flex: 1;
  min-width: 0;
  height: 23px;
  padding: 0 7px;
  border: 1px solid #868686;
  border-radius: 3px;
  background: #252525;
  box-shadow: inset 0 0 3px #111;
  color: #fd942b;
  font-family: "Open Sans", sans-serif;
}

.name-row span {
  padding-left: 5px;
  color: #999;
  font-size: 10px;
}

.section {
  margin-top: 14px;
}

.section.first {
  margin-top: 9px;
}

.section h3 {
  height: 25px;
  display: flex;
  align-items: center;
  margin-bottom: 5px;
  padding: 0 5px 0 1px;
  border-bottom: 1px solid #666;
}

.section h3 input {
  margin-right: 3px;
}

.section h3 .icon {
  width: 10px;
  height: 10px;
  margin-left: 14px;
}

.section h3 .icon.end {
  margin-left: auto;
}

.prop {
  height: 30px;
  display: flex;
  align-items: center;
}

.inset .prop {
  padding-right: 3px;
}

.prop > label {
  width: 15px;
  color: #aaa;
  font-family: "Liberation Mono", monospace;
}

.prop > label.second {
  margin-left: 10px;
}

.prop > .prop-label {
  width: 160px;
  flex: none;
  display: flex;
  align-items: center;
  padding: 0 5px 0 13px;
  color: #bdbdbd;
  font-family: inherit;
}

.prop > .prop-label.sub {
  padding-left: 26px;
}

.prop-label .fold {
  margin-left: -12px;
}

.prop-label .icon {
  width: 10px;
  height: 10px;
  margin-left: auto;
}

.color {
  flex: 1;
  height: 23px;
  flex-direction: column;
  gap: 1px;
  border: 1px solid #868686;
  padding: 1px;
  background: #1b1b1b;
}

.color i {
  width: 100%;
  height: 3px;
  background: #fff;
}

.color i:first-child {
  height: auto;
  flex: 1;
}

.group-select {
  flex: 1;
}

.prop.tall {
  height: 40px;
  align-items: flex-start;
}

.tall > .prop-label {
  margin-top: 16px;
}

.asset-field {
  flex: 1;
  min-width: 0;
  padding-top: 3px;
}

.type {
  position: relative;
  width: fit-content;
  height: 11px;
  display: flex;
  align-items: center;
  padding: 0 7px 0 5px;
  border: 1px solid #868686;
  border-bottom: none;
  border-radius: 3px 3px 0 0;
  background: #252525;
  color: #ccc;
  font-size: 9px;
  font-weight: bold;
  text-decoration: none;
}

.type .icon {
  width: 10px;
  height: 10px;
  margin-left: 1px;
  color: #4281b6;
}

.box {
  height: 23px;
  display: flex;
  margin-top: -1px;
  padding: 2px 0 2px 2px;
  border: 1px solid #868686;
  border-radius: 0 3px 3px 3px;
  background: #252525;
  font-family: "Open Sans", sans-serif;
  font-weight: bold;
}

.box span {
  flex: 1;
  padding-left: 4px;
  background: #4281b6;
  color: #252f38;
}

.empty .box span {
  background: none;
  color: #555;
}

.box button {
  width: 25px;
  color: #c43d44;
}

.box .icon {
  width: 9px;
}

.add-component {
  width: 240px;
  flex: none;
  align-self: center;
  margin-top: 20px;
}

.meter {
  position: absolute;
  right: -1px;
  bottom: 2px;
  width: 10px;
  height: 59px;
  padding: 6px 1px 6px 3px;
  border: 1px solid #2d3036;
  border-radius: 4px 0 0 4px;
  background: #3b3e46;
}

.meter i {
  display: block;
  height: 100%;
  background: repeating-linear-gradient(transparent 0 1px, #3b3e46 1px 2px), linear-gradient(#4c4c50 50%, #8d9a4c 50%, #459a8a);
}

/* status bar */
.statusbar {
  height: 26px;
  flex: none;
  display: flex;
  align-items: center;
  gap: 12px;
  padding: 0 10px;
  color: #6e6e6e;
}

.statusbar span {
  margin-left: auto;
  color: #fd942b;
}
```
